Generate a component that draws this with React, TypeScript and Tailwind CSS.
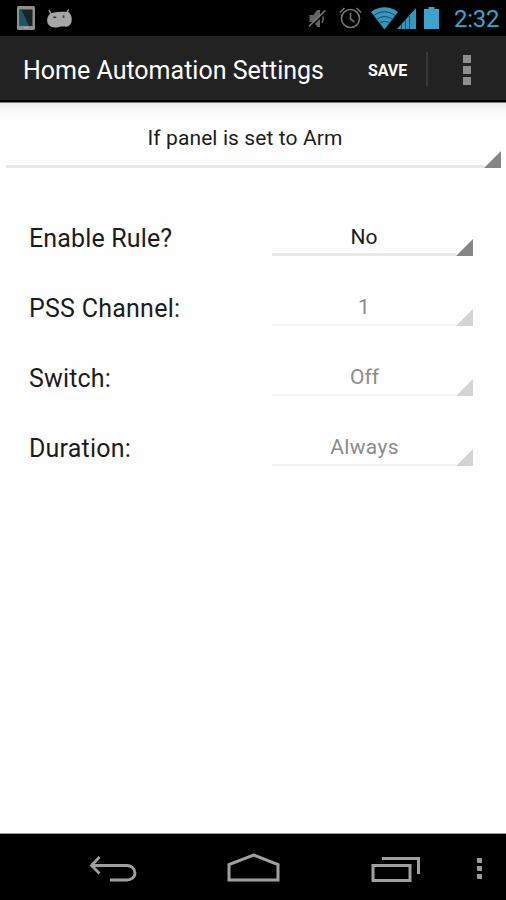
import clsx from "clsx";

const rules = [
  { label: "Enable Rule?", value: "No", enabled: true, labelClass: "tracking-[0.15px]", valueClass: "" },
  { label: "PSS Channel:", value: "1", enabled: false, labelClass: "tracking-[0.25px]", valueClass: "" },
  { label: "Switch:", value: "Off", enabled: false, labelClass: "tracking-[0.15px]", valueClass: "pl-px" },
  { label: "Duration:", value: "Always", enabled: false, labelClass: "tracking-[0.2px]", valueClass: "tracking-[0.35px] pl-px" },
];

function StatusBar() {
  return (
    <div className="h-9 shrink-0 bg-black flex items-center pl-[17px] pr-2">
      <svg className="w-[18px] h-6 shrink-0" viewBox="0 0 18 24">
        <rect width="18" height="24" rx="1.5" fill="#8f8f8f" />
        <rect x="2.5" y="3.5" width="13" height="16.5" fill="#1a2427" />
        <path d="M2.5 3.5h2L12 20H2.5z" fill="#1c5565" />
        <rect x="6.5" y="21.3" width="5" height="1" fill="#b0b0b0" />
      </svg>
      <svg className="ml-3 w-[25px] h-[19px] shrink-0" viewBox="0 0 25 19">
        <path d="M2.300 1.500l2.200 4.500M21.300 1l-1.800 4" stroke="#a6a6a6" strokeWidth="1.500" strokeLinecap="round" />
        <path d="M4.500 4C9 3 15 2.500 20.500 2.800c3 1 4.500 4.700 4.200 8.200-.2 4-2.200 6.500-5.700 6.700-2.500-.3-5-.2-7 .3-2.800.7-5.500.8-8-.2C1.200 16.300-.2 13.500.2 10.500.6 7.500 2 4.700 4.500 4z" fill="#a6a6a6" />
        <rect x="6.200" y="7.500" width="3" height="1.600" fill="#3a3a3a" />
        <rect x="15.800" y="6.300" width="1.600" height="2.600" fill="#3a3a3a" />
      </svg>

      <svg className="ml-auto w-[19px] h-[21px] shrink-0" viewBox="0 0 19 21" fill="none">
        <path d="M1.500 7h4L9 2h3v17H9.500l-4-5h-4z" fill="#626262" />
        <path d="M14 6c1.500 3 1.500 6 0 9" stroke="#626262" strokeWidth="1.500" />
        <path d="M2 19.500L18.500 3.500" stroke="#000" strokeWidth="1.500" />
        <path d="M.8 18.500L17.500 2.300" stroke="#7c7c7c" strokeWidth="1.500" />
      </svg>
      <svg className="ml-3 w-[23px] h-[22px] shrink-0" viewBox="0 0 23 22" fill="none" stroke="#757575" strokeWidth="1.600">
        <circle cx="11.500" cy="11.500" r="9" />
        <path d="M11.500 6v5.800l3.800 3M.8 5.500L5.500 1M22.200 5.500L17.500 1" />
      </svg>
      <svg className="ml-2 w-[74px] h-[24px] shrink-0" viewBox="0 0 74 24">
        <path d="M1 6C9-.2 20-.2 28 6L14.500 23.500z" fill="#3597be" />
        <path d="M3.500 9.800c7-5.400 15-5.400 22 0M6.500 13.600c5-4 11-4 16 0M9.600 17.300c3-2.500 7-2.500 9.800 0" fill="none" stroke="#12465c" strokeWidth="1" />
        <path d="M27 23L46 2v21z" fill="#3597be" />
        <path d="M31.500 18v5M35.500 14v9M39.500 9.500V23" stroke="#14506a" strokeWidth="1" />
        <path d="M54 3h4.500V1h6v2H69v20H54z" fill="#3fa2ca" />
      </svg>
      <span className="ml-2.5 w-[44px] pt-0.5 shrink-0 text-center whitespace-nowrap text-[24px] leading-9 tracking-[-0.3px] text-[#33a6d4]">2:32</span>
    </div>
  );
}

function ActionBar() {
  return (
    <header className="h-[66px] shrink-0 bg-[#222] border-b-2 border-black flex items-center pl-[23px] text-white">
      <h1 className="w-[345px] pt-1.5 text-[25px] leading-8 whitespace-nowrap">Home Automation Settings</h1>
      <button className="w-[41px] pt-1.5 text-[16px] font-bold tracking-[-0.1px] text-left">SAVE</button>
      <span className="ml-[17px] mt-px w-[2px] h-[34px] bg-[#393939]" />
      <button className="ml-[35px] mt-1 flex flex-col gap-[3px]">
        <i className="size-2 bg-[#8f8f8f]" />
        <i className="size-2 bg-[#8f8f8f]" />
        <i className="size-2 bg-[#8f8f8f]" />
      </button>
    </header>
  );
}

function Spinner({ value, enabled, className, textClass }: { value: string; enabled: boolean; className: string; textClass?: string }) {
  return (
    <div className={clsx("flex items-end", className)}>
      <div
        className={clsx(
          "flex-1 h-full text-center text-[21px] leading-6 whitespace-nowrap",
          enabled ? "border-b-[3px] border-[#e9e9e9] text-[#1c1c1c]" : "border-b-[2px] border-[#f3f3f3] text-[#8c8c8c]",
          textClass,
        )}
      >
        {value}
      </div>
      <svg className={clsx("size-[17px] shrink-0", enabled ? "fill-[#858585]" : "fill-[#d4d4d4]")} viewBox="0 0 17 17">
        <path d="M17 0v17H0z" />
      </svg>
    </div>
  );
}

function NavBar() {
  return (
    <nav className="h-[67px] shrink-0 bg-black border-t border-[#9a9a9a] flex items-center pl-[89px]">
      <svg className="mt-[3px] w-12 h-7 shrink-0" viewBox="0 0 48 28" fill="none" stroke="#a0a0a0" strokeWidth="2.800">
        <path d="M10.500 2L2.500 10.500l8 8M2.500 10.500H38c4 0 8 3 8 7.500s-4 7-8 7H21" />
      </svg>
      <svg className="ml-[90px] mt-0.5 w-[53px] h-[30px] shrink-0" viewBox="0 0 53 30" fill="none" stroke="#a0a0a0" strokeWidth="3">
        <path d="M2 27V11.500L26.500 2 51 11.500V27z" />
      </svg>
      <svg className="ml-[91px] mt-[3px] w-[50px] h-7 shrink-0" viewBox="0 0 50 28" fill="none" stroke="#a0a0a0" strokeWidth="3">
        <path d="M2 10.500h37v15H2zM11 3.500h36.500V19" />
      </svg>
      <button className="ml-[56px] mt-0.5 flex flex-col gap-[3px]">
        <i className="size-[5px] bg-[#999]" />
        <i className="size-[5px] bg-[#999]" />
        <i className="size-[5px] bg-[#999]" />
      </button>
    </nav>
  );
}

export default function App() {
  return (
    <div className="w-[506px] h-[900px] overflow-hidden flex flex-col bg-[#fefefe] font-['Roboto',sans-serif]">
      <StatusBar />
      <ActionBar />
      <main className="flex-1 border-t border-[#777] bg-linear-to-b from-[#ececec] via-[#f8f8f8] via-[7px] to-[#fefefe] to-[16px]">
        <div className="pt-[23px] pl-1.5 pr-[5px]">
          <Spinner value="If panel is set to Arm" enabled className="h-[42px]" textClass="tracking-[0.1px]" />
        </div>
        <div className="pt-[56px] pl-[29px] pr-[33px]">
          {rules.map((rule) => (
            <div key={rule.label} className="h-[70px] flex items-start justify-between">
              <div className={clsx("text-[25px] leading-[29px] text-[#1c1c1c] whitespace-nowrap", rule.labelClass)}>{rule.label}</div>
              <Spinner value={rule.value} enabled={rule.enabled} className="w-[201px] h-8" textClass={clsx("pt-px", rule.valueClass)} />
            </div>
          ))}
        </div>
      </main>
      <NavBar />
    </div>
  );
}
